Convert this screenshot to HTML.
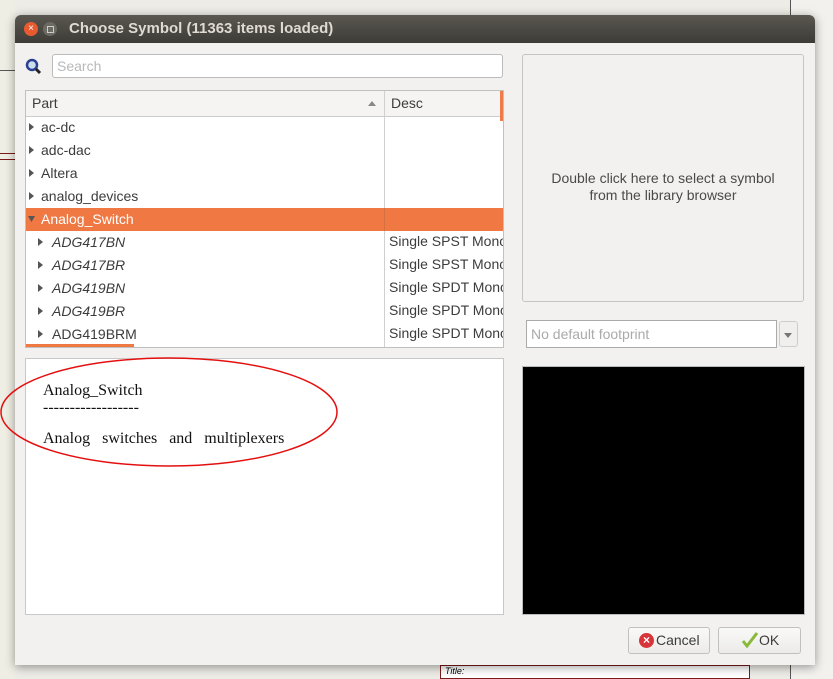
<!DOCTYPE html><html><head><style>
body{margin:0;width:833px;height:679px;overflow:hidden;background:#edece6;font-family:"Liberation Sans",sans-serif;position:relative}
.a{position:absolute}
.t{font-size:14px;color:#3c3c3c;white-space:nowrap}
</style></head><body>
<div class="a" style="left:790px;top:0;width:43px;height:679px;background:#f2f1ee;border-left:1px solid #555"></div>
<div class="a" style="left:0;top:0;width:15px;height:679px;background:#efeee4"></div>
<div class="a" style="left:0;top:70px;width:15px;height:1px;background:#555"></div>
<div class="a" style="left:0;top:153px;width:15px;height:1px;background:#7a1a1a"></div>
<div class="a" style="left:0;top:159px;width:15px;height:1px;background:#7a1a1a"></div>
<div class="a" style="left:440px;top:665px;width:310px;height:14px;border:1px solid #7a1a1a;box-sizing:border-box;background:#fff;font-size:9px;font-style:italic;padding-left:4px">Title:</div>
<div class="a" style="left:15px;top:15px;width:800px;height:650px;background:#f2f1f0;border-radius:6px 6px 0 0;box-shadow:0 2px 10px rgba(0,0,0,.4);overflow:hidden">
<div class="a" style="left:0;top:0;width:800px;height:28px;background:linear-gradient(#5a5850,#3d3c37)"></div>
</div>
<div class="a" style="left:24px;top:22px;width:14px;height:14px;border-radius:50%;background:#e85a30;color:#fff;font-size:10px;text-align:center;line-height:14px">×</div>
<div class="a" style="left:43px;top:22px;width:14px;height:14px;border-radius:50%;background:#6b6a63"><div class="a" style="left:4px;top:4px;width:5px;height:5px;border:1px solid #ccc"></div></div>
<div class="a" style="left:69px;top:20px;font-size:15px;font-weight:bold;color:#dfdbd2">Choose Symbol (11363 items loaded)</div>
<svg class="a" style="left:25px;top:58px" width="18" height="18"><circle cx="7" cy="7" r="5" fill="#cde" stroke="#2a3f8f" stroke-width="2.5"/><line x1="11" y1="11" x2="15" y2="15" stroke="#222" stroke-width="3"/></svg>
<div class="a" style="left:52px;top:54px;width:451px;height:24px;background:#fff;border:1px solid #bbb;border-radius:3px;box-sizing:border-box"></div>
<div class="a t" style="left:57px;top:58px;color:#b8b8b8">Search</div>
<div class="a" style="left:25px;top:90px;width:479px;height:258px;background:#fff;border:1px solid #c0c0c0;box-sizing:border-box"></div>
<div class="a" style="left:26px;top:91px;width:477px;height:25px;background:#f5f4f2;border-bottom:1px solid #ccc"></div>
<div class="a" style="left:384px;top:91px;width:1px;height:256px;background:#d0d0d0"></div>
<div class="a" style="left:500px;top:91px;width:3px;height:30px;background:#ef7b48"></div>
<div class="a t" style="left:32px;top:95px">Part</div>
<div class="a" style="left:368px;top:101px;border-left:4px solid transparent;border-right:4px solid transparent;border-bottom:5px solid #888"></div>
<div class="a t" style="left:391px;top:95px">Desc</div>
<div class="a" style="left:26px;top:208px;width:477px;height:23px;background:#ef7843"></div>
<div class="a" style="left:384px;top:208px;width:1px;height:23px;background:#d77040"></div>
<div class="a" style="left:26px;top:344px;width:108px;height:3px;background:#ef7843"></div>
<div class="a t" style="left:41px;top:119px">ac-dc</div>
<div class="a t" style="left:41px;top:142px">adc-dac</div>
<div class="a t" style="left:41px;top:165px">Altera</div>
<div class="a t" style="left:41px;top:188px">analog_devices</div>
<div class="a t" style="left:41px;top:211px;color:#fff">Analog_Switch</div>
<div class="a t" style="left:52px;top:234px;font-style:italic">ADG417BN</div>
<div class="a t" style="left:52px;top:257px;font-style:italic">ADG417BR</div>
<div class="a t" style="left:52px;top:280px;font-style:italic">ADG419BN</div>
<div class="a t" style="left:52px;top:303px;font-style:italic">ADG419BR</div>
<div class="a t" style="left:52px;top:326px">ADG419BRM</div>
<div class="a" style="left:389px;top:234px;width:114px;overflow:hidden">
<div class="t" style="line-height:23px;margin-top:-4px">Single SPST Mono<br>Single SPST Mono<br>Single SPDT Mono<br>Single SPDT Mono<br>Single SPDT Mono</div></div>
<svg class="a" style="left:28px;top:116px" width="30" height="230" fill="#555">
<path d="M1 7l5 4-5 4z"/><path d="M1 30l5 4-5 4z"/><path d="M1 53l5 4-5 4z"/><path d="M1 76l5 4-5 4z"/><path d="M0 100l7 0-3.5 6z" fill="#555"/>
<path d="M10 122l5 4-5 4z"/><path d="M10 145l5 4-5 4z"/><path d="M10 168l5 4-5 4z"/><path d="M10 191l5 4-5 4z"/><path d="M10 214l5 4-5 4z"/></svg>
<div class="a" style="left:25px;top:358px;width:479px;height:257px;background:#fff;border:1px solid #c8c8c8;box-sizing:border-box"></div>
<div class="a" style="left:43px;top:382px;font-family:'Liberation Serif',serif;font-size:16px;color:#111;white-space:nowrap">Analog_Switch</div>
<div class="a" style="left:43px;top:399px;font-family:'Liberation Serif',serif;font-size:16px;color:#111;white-space:nowrap">------------------</div>
<div class="a" style="left:43px;top:430px;font-family:'Liberation Serif',serif;font-size:16px;color:#111;white-space:nowrap;word-spacing:8px">Analog switches and multiplexers</div>
<svg class="a" style="left:0;top:355px" width="345" height="115"><ellipse cx="169" cy="57" rx="168" ry="54" fill="none" stroke="#e41010" stroke-width="1.5"/></svg>
<div class="a" style="left:522px;top:54px;width:282px;height:248px;border:1px solid #c4c4c4;border-radius:3px;box-sizing:border-box;background:#f2f1f0"></div>
<div class="a" style="left:522px;top:170px;width:282px;text-align:center;font-size:14px;color:#4a4a4a;line-height:17px">Double click here to select a symbol<br>from the library browser</div>
<div class="a" style="left:526px;top:320px;width:251px;height:28px;background:#fff;border:1px solid #aaa;box-sizing:border-box"></div>
<div class="a t" style="left:531px;top:326px;color:#aaa">No default footprint</div>
<div class="a" style="left:779px;top:321px;width:19px;height:26px;border:1px solid #ccc;border-radius:3px;box-sizing:border-box;background:#f0efee"></div>
<div class="a" style="left:784px;top:333px;border-left:4px solid transparent;border-right:4px solid transparent;border-top:5px solid #777"></div>
<div class="a" style="left:522px;top:366px;width:281px;height:247px;background:#000;border:1px solid #bbb"></div>
<div class="a" style="left:628px;top:627px;width:82px;height:27px;border:1px solid #c0c0c0;border-radius:3px;box-sizing:border-box;background:linear-gradient(#f9f9f8,#ecebe9)"></div>
<div class="a" style="left:639px;top:633px;width:15px;height:15px;border-radius:50%;background:#d8343a;color:#fff;font-size:12px;font-weight:bold;text-align:center;line-height:15px">×</div>
<div class="a t" style="left:656px;top:632px">Cancel</div>
<div class="a" style="left:718px;top:627px;width:83px;height:27px;border:1px solid #c0c0c0;border-radius:3px;box-sizing:border-box;background:linear-gradient(#f9f9f8,#ecebe9)"></div>
<svg class="a" style="left:741px;top:631px" width="18" height="18"><path d="M2 10l4 5L16 2" fill="none" stroke="#8ab83a" stroke-width="3"/></svg>
<div class="a t" style="left:759px;top:632px">OK</div>
</body></html>
